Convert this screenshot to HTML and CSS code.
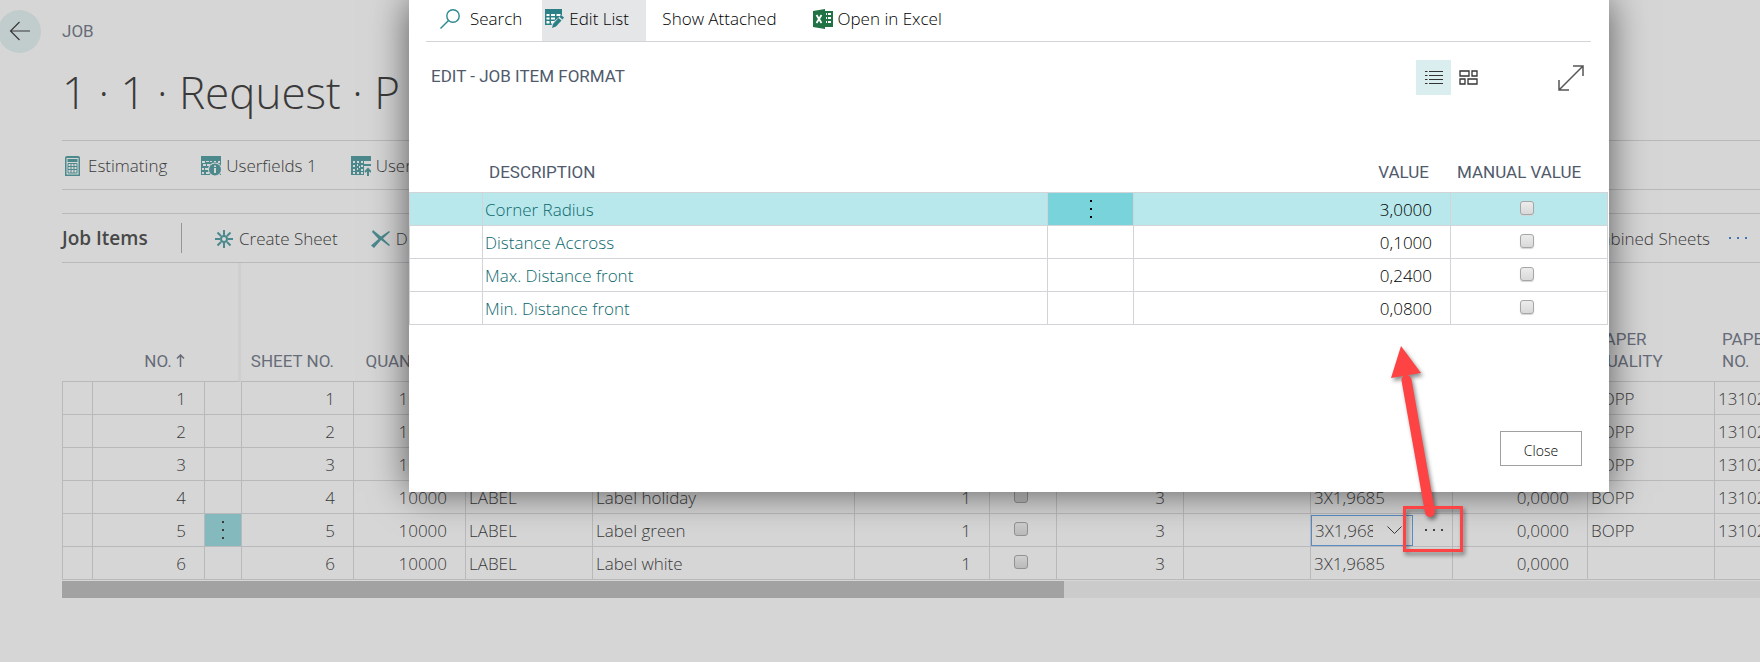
FILE: index.html
```html
<!DOCTYPE html>
<html lang="en">
<head>
<meta charset="utf-8">
<meta name="viewport" content="width=device-width, initial-scale=1">
<title>Job - Edit Job Item Format</title>
<link rel="stylesheet" href="styles.css">
</head>
<body>
<div class="page">
  <header class="page-head">
    <button class="back" type="button" aria-label="Back">
      <svg width="22" height="20" viewBox="0 0 22 20" fill="none" stroke="currentColor" stroke-width="1.2"><path d="M10.500 1L1.500 10l9 9M1.500 10H21"/></svg>
    </button>
    <span class="caption">JOB</span>
  </header>
  <main class="content">
    <h1 class="title">1 · 1 · Request · P</h1>
    <nav class="bar actions">
      <button class="action" type="button">
        <svg class="icon" width="20" height="20" viewBox="0 0 20 20"><path fill="currentColor" fill-rule="evenodd" d="M4 0h11a2 2 0 0 1 2 2v18H2V2a2 2 0 0 1 2-2zM3.500 2v16.500h12V2zM4.500 3h10v3h-10z"/><path stroke="currentColor" stroke-width="1" fill="none" d="M5 7.500h9v9.500H5zM8 7.500V17M11 7.500V17M5 10.500h9M5 13.500h9"/></svg>
        <span>Estimating</span>
      </button>
      <button class="action" type="button">
        <svg class="icon" width="20" height="20" viewBox="0 0 20 20"><path fill="currentColor" d="M0 0h20v19H0z"/><g fill="#d6d6d6"><path d="M1 5h3v2H1zM5 5h3v1H5zM9 5h2v1H9zM13 5h2v1h-2zM17 5h2v2h-2zM2 8h3v2H2zM6 8h3v2H6zM1 12h2v2H1zM4 12h3v2H4zM1 16h2v2H1zM5 16h3v2H5z"/><circle cx="14" cy="13.500" r="7"/></g><circle cx="14" cy="13.500" r="6" fill="currentColor"/><path fill="#d6d6d6" d="M13 9.500h2v1.500h-2zM13 12h2v5h-2z"/></svg>
        <span>Userfields 1</span>
      </button>
      <button class="action" type="button">
        <svg class="icon" width="20" height="20" viewBox="0 0 20 20"><path fill="currentColor" d="M0 0h20v5H0zM0 5h13v14H0zM13 8h7v2h-7z"/><path fill="#d6d6d6" d="M2 5h2v2H2zM6 5h2v2H6zM10 5h2v2h-2zM14 5h2v2h-2zM2 9h2v2H2zM10 9h2v2h-2zM2 13h2v2H2zM6 8h1v2H6zM8 10h1v2H8zM6 12h1v2H6zM10 13h2v2h-2zM2 16h2v2H2zM6 16h2v2H6zM10 16h2v2h-2z"/><path stroke="currentColor" stroke-width="2" fill="none" d="M17 20v-7M14 16l3-3 3 3"/></svg>
        <span>Userfields 2</span>
      </button>
    </nav>
    <section class="items">
      <div class="bar item-bar">
        <h2 class="items-title">Job Items</h2>
        <button class="action create" type="button">
          <svg class="icon" width="18" height="18" viewBox="0 0 18 18" fill="none" stroke="currentColor" stroke-width="2"><circle cx="9" cy="9" r="3"/><path d="M9 0v5M9 13v5M0 9h5M13 9h5M2.500 2.500L6 6M12 12l3.500 3.500M15.500 2.500L12 6M6 12l-3.500 3.500"/></svg>
          <span>Create Sheet</span>
        </button>
        <button class="action" type="button">
          <svg class="icon" width="20" height="18" viewBox="0 0 20 18"><path fill="currentColor" d="M2 0l8 6.500L18 1l1 1-7 6.500 7 6.500-1 1-8-6L3 18l-3-2.500L7.500 9 1 2z"/></svg>
          <span>D</span>
        </button>
        <button class="action combined" type="button">Combined Sheets</button>
        <button class="more" type="button" aria-label="More actions"><i></i><i></i><i></i></button>
      </div>
      <div class="sheet-wrap">
        <table class="sheet">
          <colgroup><col class="w30"><col class="w112"><col class="w37"><col class="w112"><col class="w112"><col class="w127"><col class="w262"><col class="w135"><col class="w67"><col class="w127"><col class="w127"><col class="w142"><col class="w135"><col class="w127"><col class="w127"></colgroup>
          <thead><tr>
            <th></th><th class="num">NO. <svg width="9" height="13" viewBox="0 0 9 13" fill="none" stroke="currentColor" stroke-width="1.5"><path d="M4.500 13V1M1 4.500L4.500 1 8 4.500"/></svg></th><th class="freeze"></th><th class="num">SHEET NO.</th><th class="num">QUANTITY</th><th></th><th></th><th></th><th></th><th></th><th></th><th></th><th></th><th>PAPER<br>QUALITY</th><th>PAPER<br>NO.</th>
          </tr></thead>
          <tbody>
            <tr><td></td><td class="num">1</td><td></td><td class="num">1</td><td class="num">10000</td><td></td><td></td><td></td><td></td><td></td><td></td><td></td><td></td><td>BOPP</td><td>13102</td></tr>
            <tr><td></td><td class="num">2</td><td></td><td class="num">2</td><td class="num">10000</td><td></td><td></td><td></td><td></td><td></td><td></td><td></td><td></td><td>BOPP</td><td>13102</td></tr>
            <tr><td></td><td class="num">3</td><td></td><td class="num">3</td><td class="num">10000</td><td></td><td></td><td></td><td></td><td></td><td></td><td></td><td></td><td>BOPP</td><td>13102</td></tr>
            <tr><td></td><td class="num">4</td><td></td><td class="num">4</td><td class="num">10000</td><td>LABEL</td><td>Label holiday</td><td class="num">1</td><td class="mid"><input class="check" type="checkbox" aria-label="Label holiday"></td><td class="num">3</td><td></td><td>3X1,9685</td><td class="num">0,0000</td><td>BOPP</td><td>13102</td></tr>
            <tr><td></td><td class="num">5</td><td class="picked"><button class="dots" type="button" aria-label="Row menu"><i></i><i></i><i></i></button></td><td class="num">5</td><td class="num">10000</td><td>LABEL</td><td>Label green</td><td class="num">1</td><td class="mid"><input class="check" type="checkbox" aria-label="Label green"></td><td class="num">3</td><td></td>
              <td class="edit"><div class="editor"><div class="combo"><input class="combo-text" type="text" value="3X1,9685" aria-label="Format"><button class="drop" type="button" aria-label="Open list"><svg width="15" height="9" viewBox="0 0 15 9" fill="none" stroke="currentColor"><path d="M.5.5l7 7 7-7"/></svg></button></div><button class="more assist" type="button" aria-label="Look up"><i></i><i></i><i></i></button></div></td>
              <td class="num">0,0000</td><td>BOPP</td><td>13102</td></tr>
            <tr><td></td><td class="num">6</td><td></td><td class="num">6</td><td class="num">10000</td><td>LABEL</td><td>Label white</td><td class="num">1</td><td class="mid"><input class="check" type="checkbox" aria-label="Label white"></td><td class="num">3</td><td></td><td>3X1,9685</td><td class="num">0,0000</td><td></td><td></td></tr>
          </tbody>
        </table>
        <div class="track"><div class="thumb"></div></div>
      </div>
    </section>
  </main>

  <div class="dialog" role="dialog" aria-labelledby="dialog-title">
    <div class="ribbon">
      <button class="tool search" type="button"><svg width="20" height="20" viewBox="0 0 20 20" fill="none" stroke="#2b8a90" stroke-width="1.400"><circle cx="13" cy="7" r="6.200"/><path d="M8.500 11.500L.5 19.500"/></svg>Search</button>
      <button class="tool active" type="button"><svg width="19" height="19" viewBox="0 0 19 19"><path fill="#2b8088" d="M0 0h17v16H0z"/><path fill="#fff" d="M1.500 5h3v2h-3zM6 5h4v2H6zM11.500 5h4v2h-4zM1.500 8.500h3v2h-3zM6 8.500h4v2H6zM1.500 12h3v2.500h-3zM6 12h4v2.500H6z"/><path fill="#e5e6e8" d="M19 4v15H6l1-5z"/><path fill="#2b8088" d="M16 6l3 2.500-1.500 2-3-2.500zM13.500 9l3 2.500-5.500 6L7 19l1-4z"/></svg>Edit List</button>
      <button class="tool attached" type="button">Show Attached</button>
      <button class="tool" type="button"><svg width="20" height="20" viewBox="0 0 20 20"><path fill="#217346" d="M0 2l12-2v20L0 18zM12 2h8v16h-8z"/><path fill="#fff" d="M13 4h1v2h-1zM15 4h3v2h-3zM13 8h1v2h-1zM15 8h3v2h-3zM13 12h1v2h-1zM15 12h3v2h-3z"/><path stroke="#fff" stroke-width="1.800" fill="none" d="M3.500 6l5 8M8.500 6l-5 8"/></svg>Open in Excel</button>
    </div>
    <div class="dialog-head">
      <h2 class="dialog-title" id="dialog-title">EDIT - JOB ITEM FORMAT</h2>
      <button class="view on" type="button" aria-label="List view"><svg width="18" height="14" viewBox="0 0 18 14" stroke="#333" stroke-width="1.200"><path d="M0 .5h2.500M4 .5h14M0 4.500h2.500M4 4.500h14M0 8.500h2.500M4 8.500h14M0 12.500h2.500M4 12.500h14"/></svg></button>
      <button class="view" type="button" aria-label="Tile view"><svg width="19" height="15" viewBox="0 0 19 15" fill="none" stroke="#333" stroke-width="1.300"><path d="M1 1h9v5H1zM13 1h5v5h-5zM1 9h5v5H1zM9 9h9v5H9z"/></svg></button>
      <button class="view expand" type="button" aria-label="Expand"><svg width="26" height="26" viewBox="0 0 26 26" fill="none" stroke="#555" stroke-width="1.500"><path d="M1 25L25 1M15 1h10v10M1 15v10h10"/></svg></button>
    </div>
    <table class="format">
      <colgroup><col class="f-lead"><col><col class="f-menu"><col class="f-value"><col class="f-manual"></colgroup>
      <thead><tr><th></th><th>DESCRIPTION</th><th></th><th class="num">VALUE</th><th>MANUAL VALUE</th></tr></thead>
      <tbody>
        <tr class="current"><td></td><td><a href="#">Corner Radius</a></td><td class="picked"><button class="dots" type="button" aria-label="Row menu"><i></i><i></i><i></i></button></td><td class="num">3,0000</td><td class="mid"><input class="check" type="checkbox" aria-label="Corner Radius manual value"></td></tr>
        <tr><td></td><td><a href="#">Distance Accross</a></td><td></td><td class="num">0,1000</td><td class="mid"><input class="check" type="checkbox" aria-label="Distance Accross manual value"></td></tr>
        <tr><td></td><td><a href="#">Max. Distance front</a></td><td></td><td class="num">0,2400</td><td class="mid"><input class="check" type="checkbox" aria-label="Max. Distance front manual value"></td></tr>
        <tr><td></td><td><a href="#">Min. Distance front</a></td><td></td><td class="num">0,0800</td><td class="mid"><input class="check" type="checkbox" aria-label="Min. Distance front manual value"></td></tr>
      </tbody>
    </table>
    <footer class="dialog-foot"><button class="close" type="button">Close</button></footer>
  </div>

  <svg class="callout" width="90" height="230" viewBox="0 0 90 230">
    <path d="M26.500 40L50 172" stroke="#fd4343" stroke-width="10" stroke-linecap="round"/>
    <path d="M21 6l20 27-30 5z" fill="#fd4343"/>
    <path d="M24.500 167.500h57v43h-57z" fill="none" stroke="#fd4343" stroke-width="3"/>
  </svg>
</div>
</body>
</html>
```

FILE: styles.css
```css
* { box-sizing: border-box; }
body {
  margin: 0;
  background: #d6d6d6;
  color: #3a3a3a;
  font: 300 17px/24px "Open Sans", "Noto Sans", sans-serif;
}
button {
  padding: 0;
  border: 0;
  background: none;
  color: inherit;
  font: inherit;
  white-space: nowrap;
}
h1, h2 { margin: 0; }
svg { flex: none; }
.page {
  position: relative;
  min-height: 100vh;
  overflow: hidden;
}
.page-head {
  display: flex;
  align-items: center;
  gap: 21px;
  height: 62px;
}
.back {
  display: grid;
  place-items: center;
  width: 43px;
  height: 43px;
  margin-left: -2px;
  border-radius: 50%;
  background: #c1cccd;
}
.caption, th, .dialog-title {
  font: 400 17px/22px Roboto, sans-serif;
}
.caption, .sheet th { color: #666c78; }
.content { padding-left: 62px; }
.title {
  height: 78px;
  font-size: 44px;
  line-height: 60px;
  font-weight: 300;
  white-space: nowrap;
}
.bar {
  display: flex;
  align-items: center;
  height: 50px;
  border-top: 1px solid #b9b9bc;
  border-bottom: 1px solid #b9b9bc;
}
.action {
  display: flex;
  align-items: center;
  gap: 5px;
  padding-top: 2px;
}
.icon { color: #4c898d; }
.actions { gap: 34px; padding-left: 1px; }
.items { padding-top: 23px; }
.items-title {
  width: 120px;
  border-right: 1px solid #96969a;
  color: #484848;
  font-size: 19px;
  line-height: 30px;
  font-weight: 600;
}
.create { gap: 6px; margin: 0 33px; }
.combined { margin-left: auto; }
.more {
  display: flex;
  gap: 6px;
  color: #4176b4;
}
.more i, .dots i {
  width: 2px;
  height: 2px;
  background: currentColor;
}
.item-bar .more { margin: 0 13px 0 19px; }
.sheet-wrap { overflow: hidden; }
table {
  table-layout: fixed;
  border-spacing: 0;
}
th, td { text-align: left; white-space: nowrap; }
td { padding: 2px 3px 0; height: 33px; border: solid; border-width: 0 0 1px 1px; overflow: hidden; }
.sheet { width: 1779px; }
.sheet th {
  height: 119px;
  padding: 0 8px 9px;
  border-bottom: 1px solid #b9b9bc;
  vertical-align: bottom;
}
.sheet td { border-color: #b9b9bc; }
.sheet .num, .format .num { padding-right: 18px; text-align: right; }
.sheet th.num { padding-right: 19px; padding-left: 0; }
.sheet .freeze { border-right: 3px solid #cfcfcf; }
td.mid { padding: 0 7px 0 3px; text-align: center; }
.w30 { width: 30px; }
.w37 { width: 37px; }
.w67 { width: 67px; }
.w112 { width: 112px; }
.w127 { width: 127px; }
.w135 { width: 135px; }
.w142 { width: 142px; }
.w262 { width: 262px; }
.sheet .picked { background: #84b9bd; }
.sheet .edit, .picked { padding: 0; }
.dots {
  display: flex;
  flex-direction: column;
  align-items: center;
  gap: 6px;
  width: 100%;
}
.editor { display: flex; align-items: center; }
.combo {
  display: flex;
  align-items: center;
  gap: 14px;
  width: 102px;
  height: 31px;
  border: 1px solid #588ec4;
}
.combo-text {
  width: 61px;
  padding: 2px 0 0 3px;
  border: 0;
  background: none;
  color: inherit;
  font: inherit;
}
.drop { display: flex; }
.assist { margin-left: 12px; color: #444; }
.check {
  appearance: none;
  width: 14px;
  height: 14px;
  margin: 0 0 4px;
  border: 1px solid #929292;
  border-radius: 3px;
  background: linear-gradient(#cfcfcf, #bababa);
  vertical-align: middle;
}
.format .check {
  border-color: #a6a6a6;
  background: linear-gradient(#ececec, #d9d9d9);
  box-shadow: 0 1px 1px #d5d5d5;
}
.track { height: 17px; margin-top: 1px; background: #cbcbcb; }
.thumb { width: 59%; height: 17px; background: #a2a2a2; }
.dialog {
  position: absolute;
  top: 0;
  left: 409px;
  right: 151px;
  padding-bottom: 26px;
  background: #fff;
  color: #000;
  box-shadow: 0 0 36px rgba(0, 0, 0, 0.6);
}
.ribbon {
  display: flex;
  height: 42px;
  margin: 0 18px 0 17px;
  border-bottom: 1px solid #d2d4d8;
}
.tool {
  display: flex;
  align-items: center;
  gap: 5px;
  padding-bottom: 4px;
}
.search { gap: 10px; padding-left: 14px; }
.active { width: 104px; margin: 0 16px 0 20px; padding-left: 3px; background: #e5e6e8; }
.attached { margin-right: 36px; }
.dialog-head {
  display: flex;
  height: 117px;
  padding: 18px 25px 0 22px;
}
.dialog-title {
  margin-right: auto;
  padding-top: 5px;
  color: #505a6c;
}
.view { display: grid; place-items: center; width: 35px; height: 35px; }
.on { background: #daeef0; }
.expand { width: 27px; margin-left: 71px; }
.format { width: calc(100% - 1px); }
.format th {
  height: 34px;
  padding: 0 7px 9px;
  border-bottom: 1px solid #d2d4d8;
  color: #505a6c;
  vertical-align: bottom;
}
.format th.num { padding-right: 21px; }
.format td { border-color: #d2d4d8; }
.format td:nth-child(2) { padding-left: 2px; }
.format td:last-child { border-right-width: 1px; }
.format a { color: #0c686e; text-decoration: none; }
.f-lead { width: 73px; }
.f-menu { width: 86px; }
.f-value { width: 317px; }
.f-manual { width: 158px; }
.current { background: #b8e8eb; }
.current .picked { background: #79d3da; }
.dialog-foot {
  display: flex;
  justify-content: flex-end;
  padding: 106px 27px 0 0;
}
.close {
  width: 82px;
  height: 35px;
  padding-top: 4px;
  border: 1px solid #a0a0a0;
  font-size: 14px;
}
.callout {
  position: absolute;
  top: 340px;
  left: 1380px;
  filter: drop-shadow(2px 3px 2px rgba(0, 0, 0, 0.45));
}
```
